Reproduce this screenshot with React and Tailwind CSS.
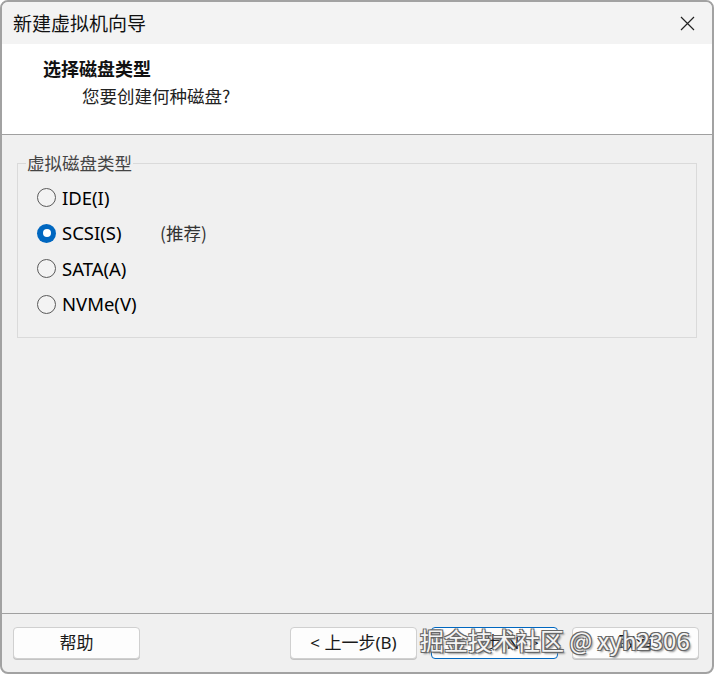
import React, { useState } from 'react';

const DISK_TYPES = [
  { id: 'ide', label: 'IDE(I)' },
  { id: 'scsi', label: 'SCSI(S)', note: '(推荐)' },
  { id: 'sata', label: 'SATA(A)' },
  { id: 'nvme', label: 'NVMe(V)' },
];

const Radio = ({ checked }) => {
  if (checked) {
    return (
      <span className="w-[19px] h-[19px] rounded-full bg-[#0067c0] flex items-center justify-center shrink-0">
        <span className="w-[8px] h-[8px] rounded-full bg-white" />
      </span>
    );
  }
  return <span className="w-[19px] h-[19px] rounded-full border border-[#5a5a5a] bg-[#f3f3f3] shrink-0" />;
};

const WizardButton = ({ children, primary }) => (
  <button
    className={`w-[127px] h-[32px] rounded-[4px] bg-[#fdfdfd] text-[17px] text-[#1a1a1a] flex items-center justify-center ${
      primary ? 'border border-[#0067c0]' : 'border border-[#d0d0d0] shadow-[0_1px_0_#c4c4c4]'
    }`}
  >
    {children}
  </button>
);

const App = () => {
  const [diskType, setDiskType] = useState('scsi');

  return (
    <div className="w-[714px] h-[674px] bg-white font-['Noto_Sans','Noto_Sans_CJK_SC',sans-serif]">
      <div className="relative w-[714px] h-[674px] flex flex-col rounded-[8px] border-2 border-[#a2a2a2] bg-[#f0f0f0] overflow-hidden">
        {/* title bar */}
        <div className="h-[42px] flex items-center justify-between pl-[11px] pr-[17px] bg-[#f3f3f3]">
          <span className="text-[19px] leading-[24px] text-[#111] font-['Noto_Sans_CJK_SC',sans-serif]">新建虚拟机向导</span>
          <svg width="15" height="15" viewBox="0 0 15 15" className="text-[#222]">
            <path d="M1 1 L14 14 M14 1 L1 14" stroke="currentColor" strokeWidth="1.2" fill="none" />
          </svg>
        </div>

        {/* header */}
        <div className="h-[91px] bg-white border-b border-[#a0a0a0] pt-[12px] pl-[41px] font-['Noto_Sans_CJK_SC',sans-serif]">
          <div className="text-[18px] leading-[24px] font-bold text-[#111]">选择磁盘类型</div>
          <div className="mt-[4px] ml-[39px] text-[17.5px] leading-[24px] text-[#222]">您要创建何种磁盘?</div>
        </div>

        {/* body */}
        <div className="flex-1 pt-[16px] px-[15px]">
          <fieldset className="border border-[#dadada] pb-[15px]">
            <legend className="ml-[8px] px-[1px] text-[17.5px] leading-[24px] text-[#444] font-['Noto_Sans_CJK_SC',sans-serif]">
              虚拟磁盘类型
            </legend>
            <div className="pt-[5px] pl-[19px] flex flex-col">
              {DISK_TYPES.map((t) => (
                <label
                  key={t.id}
                  className="h-[35.5px] flex items-center cursor-default"
                  onClick={() => setDiskType(t.id)}
                >
                  <Radio checked={diskType === t.id} />
                  <span className={`ml-[6px] text-[18.5px] leading-[24px] text-black ${t.note ? 'w-[98px]' : ''}`}>
                    {t.label}
                  </span>
                  {t.note && (
                    <span className="text-[17.5px] leading-[24px] text-[#333] font-['Noto_Sans_CJK_SC',sans-serif]">
                      {t.note}
                    </span>
                  )}
                </label>
              ))}
            </div>
          </fieldset>
        </div>

        {/* footer */}
        <div className="h-[59px] border-t border-[#a0a0a0] pt-[13px] pl-[11px] pr-[13px] flex items-start">
          <WizardButton>帮助</WizardButton>
          <div className="ml-auto flex gap-[14px]">
            <WizardButton>&lt; 上一步(B)</WizardButton>
            <WizardButton primary>下一步(N) &gt;</WizardButton>
            <WizardButton>取消</WizardButton>
          </div>
        </div>

        {/* watermark */}
        <div className="absolute left-[418px] top-[621px] text-[24px] leading-[34px] text-[#f4f4f4] whitespace-nowrap font-['Noto_Sans_CJK_SC',sans-serif] [text-shadow:1px_1px_0_#666,-1px_-1px_0_#666,1px_-1px_0_#666,-1px_1px_0_#666,2px_2px_2px_#888]">
          掘金技术社区 @ xyh2306
        </div>
      </div>
    </div>
  );
};

export default App;
